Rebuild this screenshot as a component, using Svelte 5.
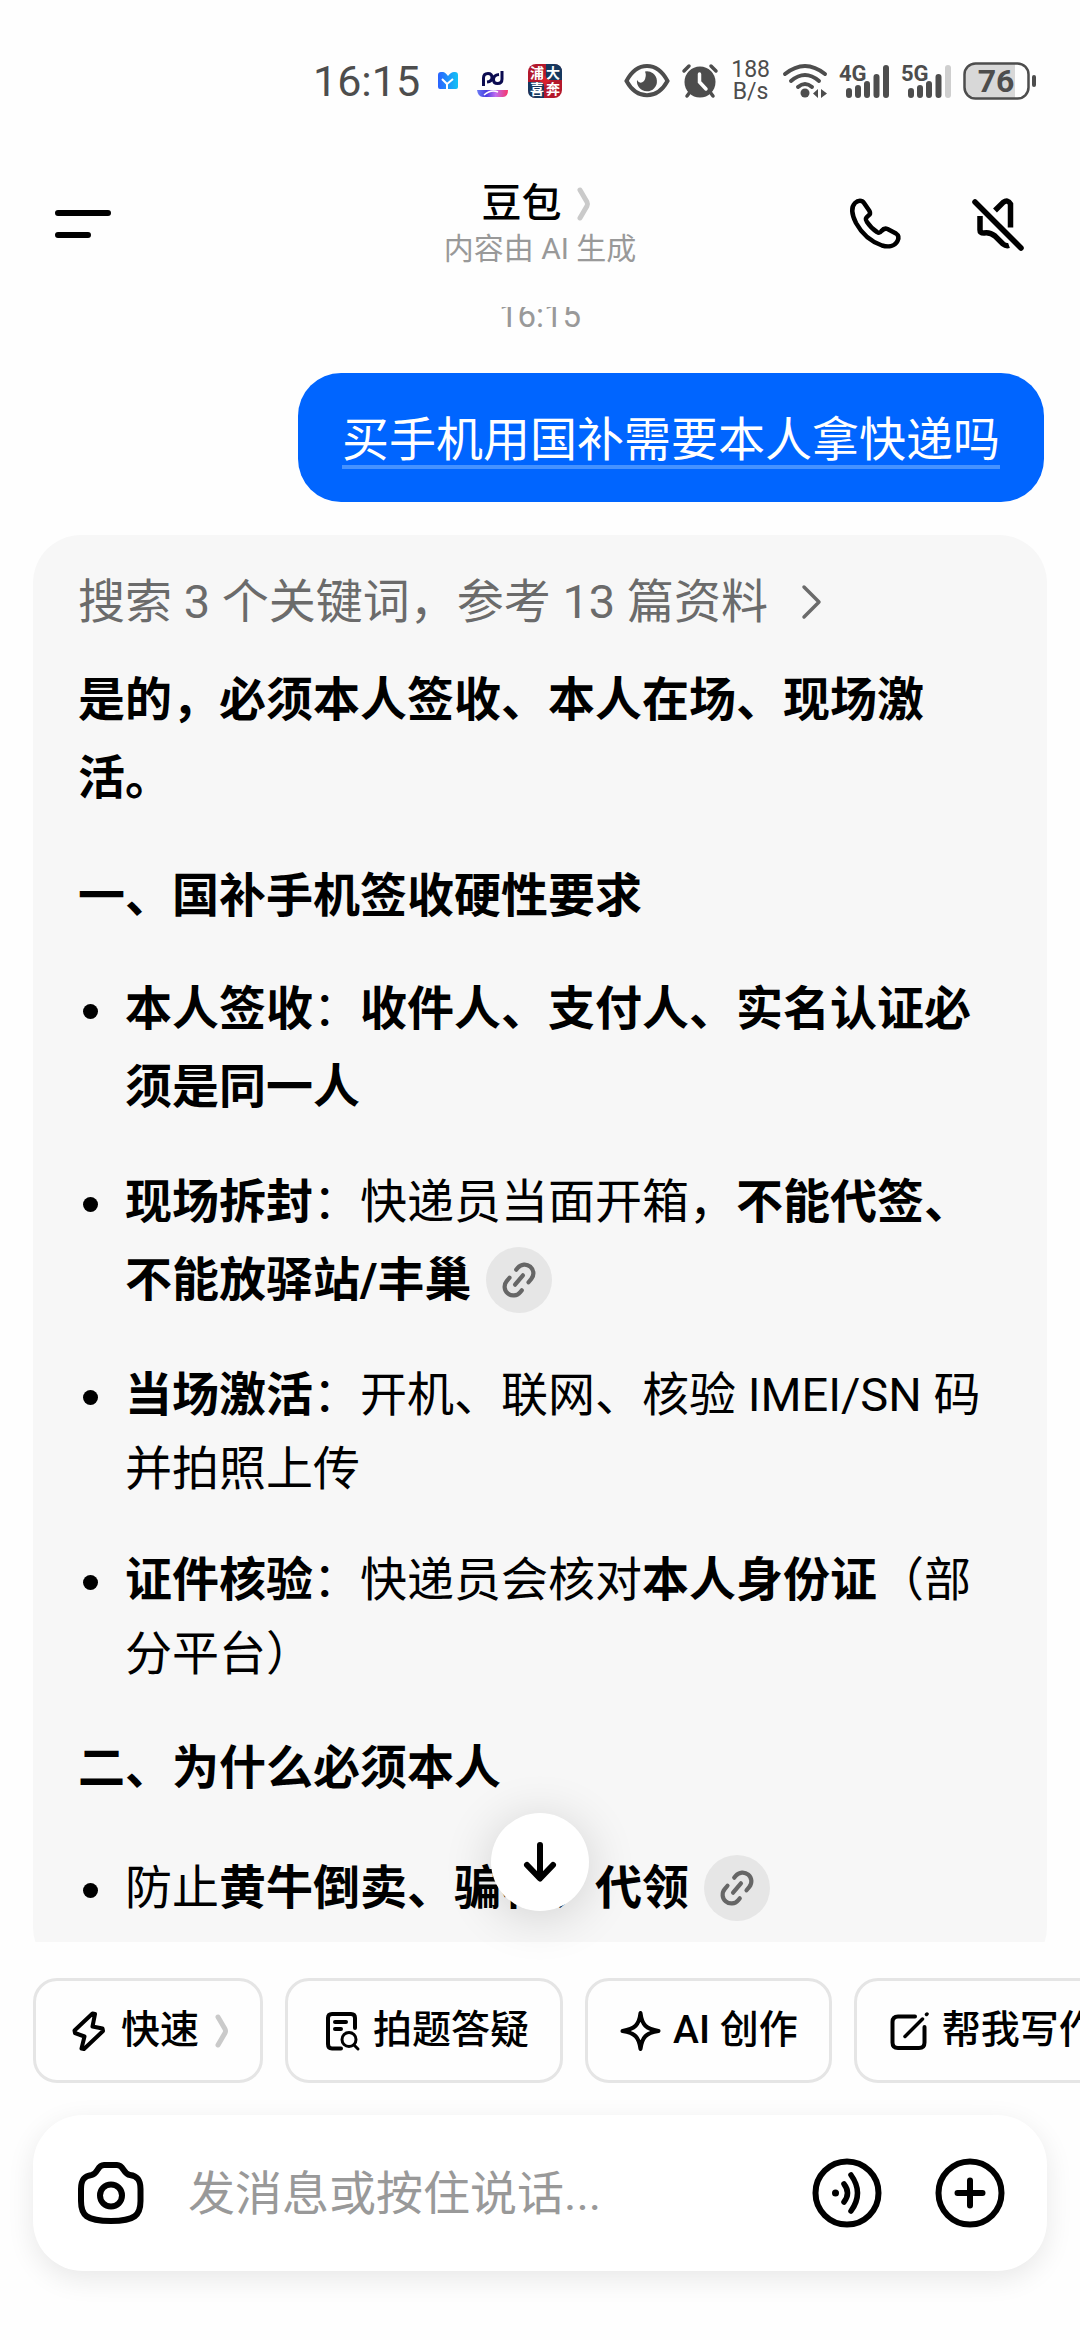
<script lang="ts">
	type Segment = { text: string; strong?: boolean };
	type Item = { segments: Segment[]; cited?: boolean };

	const requirements: Item[] = [
		{
			segments: [
				{ text: '本人签收', strong: true },
				{ text: '：' },
				{ text: '收件人、支付人、实名认证必须是同一人', strong: true }
			]
		},
		{
			segments: [
				{ text: '现场拆封', strong: true },
				{ text: '：快递员当面开箱，' },
				{ text: '不能代签、不能放驿站/丰巢', strong: true }
			],
			cited: true
		},
		{
			segments: [
				{ text: '当场激活', strong: true },
				{ text: '：开机、联网、核验 IMEI/SN 码并拍照上传' }
			]
		},
		{
			segments: [
				{ text: '证件核验', strong: true },
				{ text: '：快递员会核对' },
				{ text: '本人身份证', strong: true },
				{ text: '（部分平台）' }
			]
		}
	];

	const reasons: Item[] = [
		{
			segments: [{ text: '防止' }, { text: '黄牛倒卖、骗补、代领', strong: true }],
			cited: true
		}
	];

	const chips = [
		{ icon: 'bolt', label: '快速', more: true },
		{ icon: 'scan', label: '拍题答疑', more: false },
		{ icon: 'spark', label: 'AI 创作', more: false },
		{ icon: 'edit', label: '帮我写作', more: false }
	];

	let message = $state('');
</script>

{#snippet items(list: Item[])}
	{#each list as item}
		<li>
			{#each item.segments as segment}{#if segment.strong}<strong>{segment.text}</strong>{:else}{segment.text}{/if}{/each}{#if item.cited}<button class="cite" aria-label="查看来源">
					<svg width="42" height="42" viewBox="0 0 24 24" fill="none" stroke="currentColor" stroke-width="2.4" stroke-linecap="round">
						<g transform="rotate(-50 12 12)">
							<path d="M8.5 17H7A5 5 0 0 1 7 7h2.5" />
							<path d="M15.5 7H17a5 5 0 0 1 0 10h-2.5" />
							<path d="M8.5 12h7" />
						</g>
					</svg>
				</button>{/if}
		</li>
	{/each}
{/snippet}

{#snippet chevron()}
	<svg class="chevron" width="14" height="34" viewBox="0 0 14 34" fill="none" stroke="#cacaca" stroke-width="5" stroke-linecap="round" stroke-linejoin="round">
		<path d="M3 3 10 15Q11 17 10 19L3 31" />
	</svg>
{/snippet}

<div class="screen">
	<div class="status-bar">
		<div class="status-left">
			<span class="clock">16:15</span>
			<svg width="20" height="20" viewBox="0 0 20 20">
				<defs>
					<linearGradient id="app-m"><stop offset="0" stop-color="#2a62ff" /><stop offset="1" stop-color="#12c3f5" /></linearGradient>
				</defs>
				<path d="M3 1H5Q7 1 10 5Q13 1 16 1H17Q20 1 20 4V16Q20 18 18 18H2Q0 18 0 16V4Q0 1 3 1Z" fill="url(#app-m)" />
				<path d="M4 8 9 13V18M9 13 15 8" stroke="#fff" stroke-width="2" fill="none" />
			</svg>
			<svg width="34" height="34" viewBox="0 0 34 34">
				<defs>
					<linearGradient id="app-p"><stop offset="0" stop-color="#6b7cf5" /><stop offset=".3" stop-color="#4a3ee0" /><stop offset=".6" stop-color="#c06cf0" /><stop offset="1" stop-color="#f83468" /></linearGradient>
				</defs>
				<path d="M7.500 22V14Q7.500 9.500 12 9.500Q16 9.500 16 13.500Q16 17.500 11 18M26 7V15Q26 19.500 21.500 19.500Q17.500 19.500 17.500 15.500Q17.500 11 23 10.500" fill="none" stroke="#0b0b50" stroke-width="3" />
				<path d="M1 26H32Q32 33 27 33H7Q2 33 1 26Z" fill="url(#app-p)" />
				<path d="M8 31Q15 25 22 28" stroke="#fff" stroke-width="1.5" fill="none" />
			</svg>
			<svg width="34" height="34" viewBox="0 0 34 34">
				<rect width="34" height="34" rx="8" fill="#b3182c" />
				<path d="M18 0H26Q34 0 34 8V16H18ZM0 18H16V34H8Q0 34 0 26Z" fill="#16385f" />
				<g class="app-text" fill="#fff"><text x="2" y="14">浦</text><text x="18" y="14">大</text><text x="2" y="30">喜</text><text x="18" y="30">奔</text></g>
				<path d="M17 11 19 15 23 17 19 19 17 23 15 19 11 17 15 15Z" fill="#d8202c" />
			</svg>
		</div>
		<div class="status-right">
			<svg width="46" height="34" viewBox="0 0 46 34">
				<path d="M2.500 17C13-3 33-3 43.500 17C33 36 13 36 2.500 17Z" fill="none" stroke="#4d4d4d" stroke-width="4" />
				<path d="M21 7.500A10 10 0 1 1 13 16Q16 21 20 17Q23 12 21 7.500Z" fill="#4d4d4d" />
			</svg>
			<svg width="36" height="34" viewBox="0 0 36 34">
				<circle cx="18" cy="18" r="15.500" fill="#4d4d4d" />
				<path d="M2 7 7 2M34 7 29 2M8 28 5 32M28 28 31 32" stroke="#4d4d4d" stroke-width="3.500" stroke-linecap="round" />
				<path d="M17.500 10V18L24 25" fill="none" stroke="#fff" stroke-width="3.500" stroke-linecap="round" />
			</svg>
			<span class="speed">188<br />B/s</span>
			<svg width="44" height="34" viewBox="0 0 44 34" fill="none" stroke="#4d4d4d" stroke-width="4" stroke-linecap="round">
				<path d="M2 10Q22-6 42 10M8 17Q22 5 36 17M15 23Q22 17 29 23" />
				<circle cx="22" cy="29" r="4.500" fill="#4d4d4d" stroke="none" />
				<path d="M35 25V34L30 29.500ZM38 25V34L44 29.500Z" fill="#4d4d4d" stroke="none" />
			</svg>
			<svg class="signal" width="50" height="34" viewBox="0 0 50 34" stroke="#4d4d4d" stroke-width="6" stroke-linecap="round">
				<path d="M10 27V31M19 24V31M28 20V31M37.500 13V31M47 4V31" />
				<text x="0" y="17">4G</text>
			</svg>
			<svg class="signal" width="50" height="34" viewBox="0 0 50 34" stroke="#4d4d4d" stroke-width="6" stroke-linecap="round">
				<path d="M10 27V31M19 24V31M28 20V31M37.500 13V31" />
				<path d="M47 4V31" stroke="#cfcfcf" />
				<text x="0" y="17">5G</text>
			</svg>
			<svg class="battery" width="74" height="38" viewBox="0 0 74 38">
				<path d="M12 2H52V36H12Q2 36 2 26V12Q2 2 12 2Z" fill="#d8d8d8" />
				<rect x="1.500" y="1.500" width="64" height="35" rx="11" fill="none" stroke="#4d4d4d" stroke-width="2.500" />
				<rect x="69" y="13" width="4" height="12" rx="2" fill="#4d4d4d" />
				<text x="33" y="30" text-anchor="middle">76</text>
			</svg>
		</div>
	</div>

	<header>
		<button class="icon-button" aria-label="菜单">
			<svg width="56" height="54" viewBox="0 0 56 54" stroke="currentColor" stroke-width="6" stroke-linecap="round"><path d="M3 16H53M3 38H33" /></svg>
		</button>
		<div class="heading">
			<button class="title">豆包{@render chevron()}</button>
			<p>内容由 AI 生成</p>
		</div>
		<div class="actions">
			<button class="icon-button" aria-label="语音通话">
				<svg width="54" height="54" viewBox="-1 -1 54 54" fill="none" stroke="currentColor" stroke-width="4.500" stroke-linejoin="round">
					<path d="M5 5C8 2 12 2 14 5L19.500 13C20.500 15 20 16.500 18.500 17.500C15.500 20 15 21 17 24C20 28.500 23 31.500 27 34C29 35.500 30 35 31.500 33C33.500 30.500 35 30 37.500 31L46 35.500C49 37.500 49 40 47.500 43C45 48 39 49.500 32 47.500C22 44 12 36 6 25C2 17 1 9 5 5Z" />
				</svg>
			</button>
			<button class="icon-button" aria-label="静音">
				<svg width="54" height="54" viewBox="-1 -1 54 54" fill="none" stroke="currentColor" stroke-width="5.500">
					<path d="M23 12.500 31 4.500Q36 1 38.500 6V29.500M8 18V32Q8 35 12 35Q18 34 23 38L31 46Q34 48.500 37 47.500" />
					<path d="M3 4 49 50" stroke-linecap="round" />
				</svg>
			</button>
		</div>
	</header>

	<main>
		<time>16:15</time>
		<div class="question"><span>买手机用国补需要本人拿快递吗</span></div>

		<article>
			<button class="sources">
				搜索 3 个关键词，参考 13 篇资料
				<svg width="20" height="34" viewBox="0 0 20 34" fill="none" stroke="currentColor" stroke-width="3.500" stroke-linecap="round" stroke-linejoin="round"><path d="M2 2 17 17 2 32" /></svg>
			</button>
			<p class="lead">是的，必须本人签收、本人在场、现场激活。</p>
			<h3>一、国补手机签收硬性要求</h3>
			<ul class="requirements">{@render items(requirements)}</ul>
			<h3>二、为什么必须本人</h3>
			<ul class="reasons">{@render items(reasons)}</ul>
		</article>
	</main>

	<footer>
		<button class="to-bottom" aria-label="回到底部">
			<svg width="34" height="40" viewBox="0 0 34 40" fill="none" stroke="currentColor" stroke-width="6" stroke-linecap="round" stroke-linejoin="round"><path d="M17 3V36M4 23 17 36.500 30 23" /></svg>
		</button>
		<div class="chips">
			{#each chips as chip}
				<button class="chip">
					<svg width="42" height="42" viewBox="0 0 42 42" fill="none" stroke="currentColor" stroke-width="4" stroke-linecap="round" stroke-linejoin="round">
						{#if chip.icon === 'bolt'}
							<path d="M25.500 3.500 28 4 25.500 16.500 35.500 18.500 36 21 17 39 14.500 38.500 17.500 26.500 8 23 7.500 20.500Z" />
						{:else if chip.icon === 'scan'}
							<path d="M36 18V8Q36 4 32 4H13Q9 4 9 8V34Q9 38.500 13 38.500H22" />
							<path d="M16 12H27M16 19H22" />
							<circle cx="30" cy="29.500" r="7" stroke-width="3" />
							<path d="M35 35 39 39" stroke-width="3" />
						{:else if chip.icon === 'spark'}
							<path d="M21.500 3C23 15 27 19 39.500 21C27 23 23 27 21.500 39C20 27 16 23 3.500 21C16 19 20 15 21.500 3Z" />
						{:else}
							<path d="M27 6.500H10Q4.500 6.500 4.500 12V32.500Q4.500 38 10 38H31Q36.500 38 36.500 32.500V17" />
							<path d="M17 26.500 34.500 9M38.500 4.500 39 4" stroke-width="3.500" />
						{/if}
					</svg>
					{chip.label}
					{#if chip.more}{@render chevron()}{/if}
				</button>
			{/each}
		</div>
		<div class="composer">
			<button class="icon-button" aria-label="拍照">
				<svg width="68" height="64" viewBox="0 0 68 64" fill="none" stroke="currentColor" stroke-width="6">
					<path d="M27 4H40C47 4 46 13 53 14C61 15 63.500 20 63.500 28V40C63.500 54 58 60 34 60C9 60 4 54 4 40V28C4 20 6.500 15 14.500 14C21 13 20 4 27 4Z" />
					<circle cx="34" cy="34.500" r="11" />
				</svg>
			</button>
			<input type="text" aria-label="消息" placeholder="发消息或按住说话..." bind:value={message} />
			<button class="icon-button" aria-label="语音输入">
				<svg width="70" height="70" viewBox="0 0 70 70" fill="none" stroke="currentColor" stroke-width="6" stroke-linecap="round">
					<circle cx="35" cy="35" r="31.500" />
					<circle cx="23.500" cy="35" r="3.500" fill="currentColor" stroke="none" />
					<path d="M32 26Q39 35 32 44M39 17Q52 35 39 53" stroke-width="5.500" />
				</svg>
			</button>
			<button class="icon-button" aria-label="更多">
				<svg width="70" height="70" viewBox="0 0 70 70" fill="none" stroke="currentColor" stroke-width="6" stroke-linecap="round">
					<circle cx="35" cy="35" r="31.500" />
					<path d="M22.500 35H47.500M35 22.500V47.500" />
				</svg>
			</button>
		</div>
	</footer>
</div>

<style>
	:global(body) {
		background: #fefefe;
	}

	.screen {
		display: flex;
		flex-direction: column;
		height: 100vh;
		overflow: hidden;
		color: #000;
		font-family: Roboto, 'Noto Sans CJK SC', sans-serif;
		font-size: 47px;
	}

	button {
		padding: 0;
		border: 0;
		background: none;
		color: inherit;
		font: inherit;
		cursor: pointer;
	}

	svg {
		display: block;
		flex: none;
		overflow: visible;
	}

	p,
	h3,
	ul {
		margin: 0;
		padding: 0;
	}

	/* Status bar */
	.status-bar {
		display: flex;
		align-items: center;
		justify-content: space-between;
		padding: 56px 43px 0 313px;
		height: 50px;
		color: #4d4d4d;
	}

	.status-left {
		display: flex;
		align-items: center;
		gap: 18px;
	}

	.clock {
		font-size: 43px;
		line-height: 50px;
	}

	.app-text {
		font-size: 14px;
		font-weight: 700;
	}

	.status-right {
		display: flex;
		align-items: center;
		gap: 12px;
	}

	.speed {
		margin: 0 1px;
		font-size: 23px;
		line-height: 22px;
		text-align: center;
	}

	.signal text {
		font-size: 22px;
		font-weight: 700;
		fill: #4d4d4d;
		stroke: #fefefe;
		stroke-width: 3px;
		paint-order: stroke;
	}

	.battery text {
		font-size: 32px;
		font-weight: 700;
		fill: #4d4d4d;
	}

	/* Header */
	header {
		display: grid;
		grid-template-columns: 1fr auto 1fr;
		align-items: center;
		padding: 72px 55px 37px;
	}

	.icon-button {
		display: block;
		justify-self: start;
	}

	.heading {
		display: flex;
		flex-direction: column;
		align-items: center;
	}

	.title {
		display: flex;
		align-items: center;
		gap: 15px;
		padding: 2px 8px 0 0;
		font-size: 40px;
		font-weight: 500;
		line-height: 48px;
	}

	.heading p {
		color: #999;
		font-size: 30px;
		line-height: 42px;
	}

	.actions {
		display: flex;
		justify-content: flex-end;
		gap: 68px;
	}

	/* Conversation */
	main {
		display: flex;
		flex: 1;
		flex-direction: column;
		min-height: 0;
		padding: 0 33px;
		overflow: hidden;
	}

	time {
		margin: -11px 0 37px;
		color: #999;
		font-size: 33px;
		line-height: 40px;
		text-align: center;
	}

	.question {
		align-self: flex-end;
		margin: 0 3px 33px;
		padding: 33px 44px 29px;
		border-radius: 43px;
		background: #0065ff;
		color: #fff;
		line-height: 67px;
	}

	.question span {
		text-decoration: underline 4px #4592ff;
		text-underline-offset: 9px;
		text-decoration-skip-ink: none;
	}

	article {
		flex: none;
		padding: 32px 45px 48px;
		border-radius: 48px;
		background: #f7f7f7;
	}

	.sources {
		display: flex;
		align-items: center;
		gap: 34px;
		margin-bottom: 24px;
		color: #6b6b6b;
		line-height: 70px;
	}

	.lead,
	h3,
	strong {
		font-size: 47px;
		font-weight: 700;
		line-height: 78px;
	}

	h3 {
		margin-top: 40px;
	}

	ul {
		display: flex;
		flex-direction: column;
		gap: 37px;
		list-style: none;
	}

	.requirements {
		margin-top: 35px;
	}

	.reasons {
		margin-top: 42px;
	}

	li {
		position: relative;
		padding-left: 47px;
		line-height: 70px;
	}

	li::before {
		position: absolute;
		top: 34px;
		left: 5px;
		width: 15px;
		height: 15px;
		border-radius: 50%;
		background: #000;
		content: '';
	}

	.cite {
		display: inline-flex;
		align-items: center;
		justify-content: center;
		width: 66px;
		height: 66px;
		margin-left: 15px;
		border-radius: 50%;
		background: #e6e6e6;
		color: #666;
		vertical-align: -5px;
	}

	/* Bottom area */
	footer {
		position: relative;
		padding: 36px 33px 69px;
	}

	.to-bottom {
		position: absolute;
		bottom: 100%;
		left: 50%;
		display: flex;
		align-items: center;
		justify-content: center;
		width: 98px;
		height: 98px;
		margin: 0 0 31px -49px;
		border-radius: 50%;
		background: #fff;
		box-shadow: 0 6px 50px rgba(0, 0, 0, 0.16);
	}

	.chips {
		display: flex;
		gap: 22px;
		margin: 0 -33px 32px 0;
		overflow: hidden;
	}

	.chip {
		display: flex;
		flex: none;
		align-items: center;
		gap: 12px;
		padding: 22px 31px;
		border: 3px solid #e5e5e5;
		border-radius: 24px;
		font-size: 39px;
		font-weight: 500;
		line-height: 55px;
		white-space: nowrap;
	}

	.chip .chevron {
		margin-left: 4px;
	}

	.composer {
		display: flex;
		align-items: center;
		gap: 53px;
		padding: 43px 42px 43px 44px;
		border-radius: 50px;
		background: #fff;
		box-shadow: 0 8px 28px rgba(0, 0, 0, 0.09);
	}

	input {
		flex: 1;
		min-width: 0;
		margin-left: -10px;
		padding: 2px 0 0;
		border: 0;
		outline: 0;
		background: none;
		color: inherit;
		font: inherit;
		line-height: 68px;
	}

	input::placeholder {
		color: #999;
		opacity: 1;
	}
</style>
